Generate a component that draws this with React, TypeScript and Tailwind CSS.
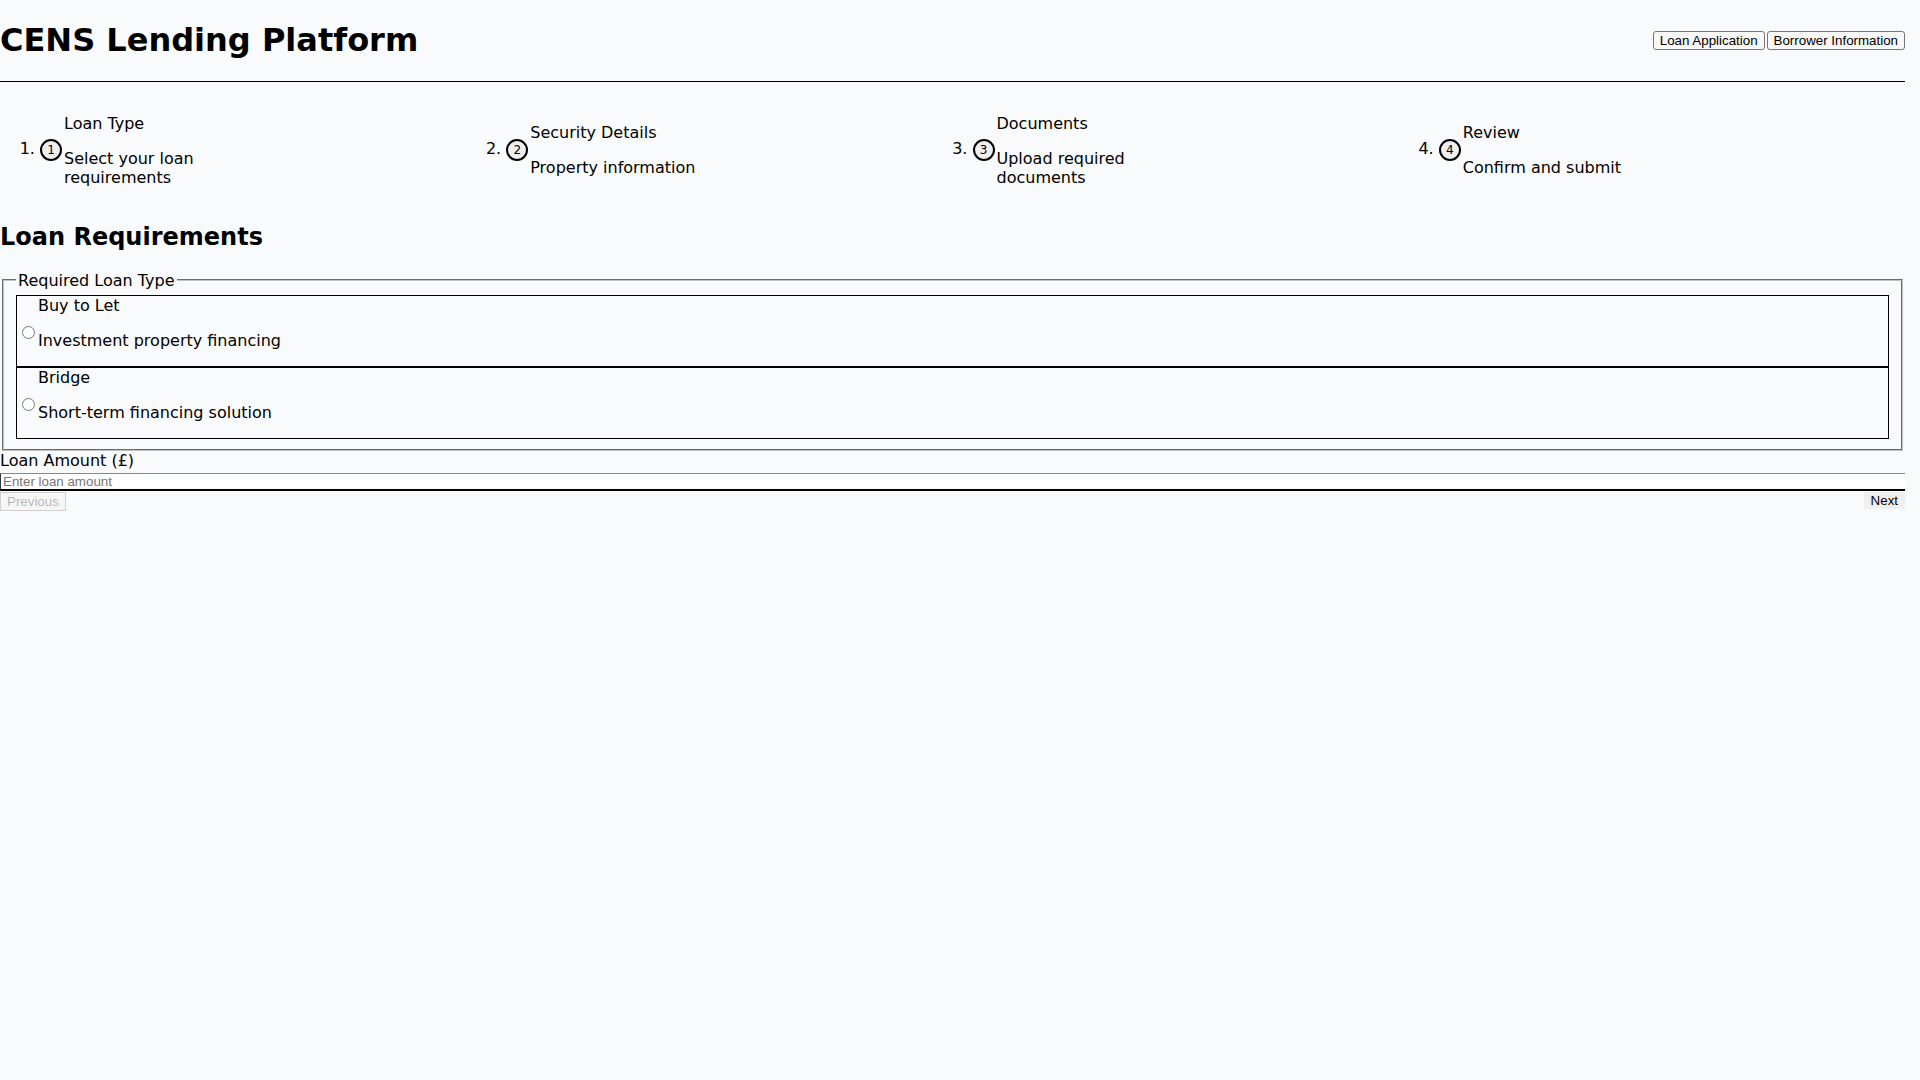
import { useState } from "react";

const steps = [
  { n: 1, title: "Loan Type", desc: "Select your loan requirements" },
  { n: 2, title: "Security Details", desc: "Property information" },
  { n: 3, title: "Documents", desc: "Upload required documents" },
  { n: 4, title: "Review", desc: "Confirm and submit" },
];

const loanTypes = [
  { id: "btl", title: "Buy to Let", desc: "Investment property financing" },
  { id: "bridge", title: "Bridge", desc: "Short-term financing solution" },
];

export default function App() {
  const [loanType, setLoanType] = useState("");
  const [amount, setAmount] = useState("");

  return (
    <div className="min-h-screen bg-[#f9fafb] text-black font-['DejaVu_Sans',sans-serif] text-[16px] leading-[normal]">
      <div className="mr-[15px]">
        <header className="flex items-center justify-between border-b border-black">
          <h1 className="my-[21.44px] text-[32px] font-bold">CENS Lending Platform</h1>
          <nav className="flex gap-[2px] font-['Liberation_Sans',Arial,sans-serif] text-[13.33px]">
            <button className="px-[6px] py-px border border-[#767676] rounded-[3px] bg-[#f8f8f8]">
              Loan Application
            </button>
            <button className="px-[6px] py-px border border-[#767676] rounded-[3px] bg-[#f8f8f8]">
              Borrower Information
            </button>
          </nav>
        </header>

        <ol className="grid grid-cols-4 list-decimal pl-10 my-4">
          {steps.map((s) => (
            <li key={s.n}>
              <div className="flex items-center h-full">
                <span className="shrink-0 flex items-center justify-center w-[22px] h-[22px] rounded-full border-2 border-black bg-[#efefef] text-[12px]">
                  {s.n}
                </span>
                <div className="ml-[2px] max-w-48">
                  <p className="my-4">{s.title}</p>
                  <p className="my-4">{s.desc}</p>
                </div>
              </div>
            </li>
          ))}
        </ol>

        <h2 className="my-[19.92px] text-[24px] font-bold">Loan Requirements</h2>

        <fieldset className="mx-[2px] px-3 pt-[5.6px] pb-[10px] border-2 border-[#c0c0c0] [border-style:groove]">
          <legend className="px-[2px]">Required Loan Type</legend>
          {loanTypes.map((t) => (
            <label key={t.id} className="flex items-center border border-black">
              <input
                type="radio"
                name="loanType"
                value={t.id}
                checked={loanType === t.id}
                onChange={() => setLoanType(t.id)}
                className="w-[13px] h-[13px] mt-[3px] mr-[3px] ml-[5px]"
              />
              <div>
                <span className="block">{t.title}</span>
                <p className="my-4">{t.desc}</p>
              </div>
            </label>
          ))}
        </fieldset>

        <label htmlFor="amount" className="block">
          Loan Amount (£)
        </label>
        <input
          id="amount"
          type="number"
          value={amount}
          onChange={(e) => setAmount(e.target.value)}
          placeholder="Enter loan amount"
          className="block w-full mt-[3px] px-[2px] py-0 bg-white border border-r-0 border-[#8a8a8a] border-l-[#333] border-b-2 border-b-black font-['Liberation_Sans',Arial,sans-serif] text-[13.33px] placeholder:text-[#757575]"
        />

        <div className="flex items-start justify-between mt-px font-['Liberation_Sans',Arial,sans-serif] text-[13.33px]">
          <button
            disabled
            className="px-[6px] py-px border border-[#7676764d] bg-[#efefef4d] text-[#1010104d]"
          >
            Previous
          </button>
          <button className="px-[7px] py-px bg-[#efefef]">Next</button>
        </div>
      </div>
    </div>
  );
}
